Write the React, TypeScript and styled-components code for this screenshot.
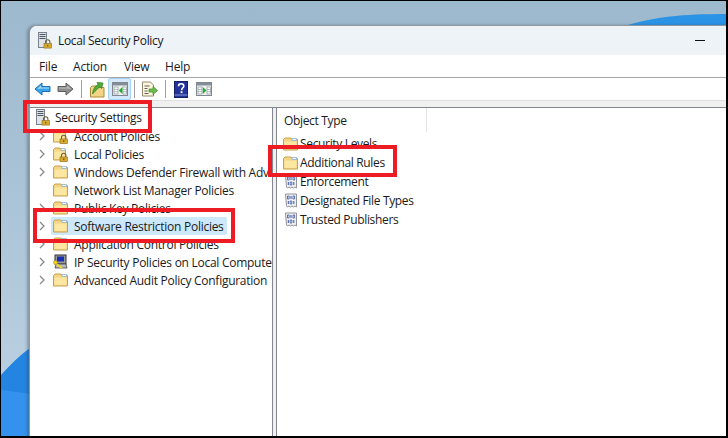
import React from "react";
import styled, { createGlobalStyle } from "styled-components";

const Global = createGlobalStyle`
  html, body { margin: 0; padding: 0; background: #fff; }
  body { font-family: "Open Sans", "Noto Sans", "Liberation Sans", sans-serif; }
`;

const Desktop = styled.div`
  position: relative;
  width: 728px;
  height: 438px;
  box-sizing: border-box;
  padding: 25px 0 0 29px;
  overflow: hidden;
  background: linear-gradient(180deg, #9db9ce 0%, #a6bfd3 30%, #b9cfe1 85%);
`;
const Wallpaper = styled.svg`
  position: absolute;
  inset: 0;
`;
const ScreenEdge = styled.div`
  position: absolute;
  inset: 0;
  border: solid #000;
  border-width: 1px 2px 2px 1px;
  pointer-events: none;
`;
const Win = styled.div`
  position: relative;
  height: 100%;
  display: flex;
  flex-direction: column;
  border-left: 1px solid #8f979f;
  border-top: 1px solid #8f979f;
  border-top-left-radius: 8px;
  overflow: hidden;
  background: #fff;
  box-shadow: -2px 0 3px rgba(60, 70, 80, 0.4);
`;
const TitleBar = styled.div`
  flex: 0 0 29px;
  display: flex;
  align-items: center;
  background: #eef3f8;
  padding: 0 23px 0 8px;
  font-size: 12px;
  color: #1a1a1a;
`;
const TitleText = styled.span`
  margin-left: 6px;
  flex: 1;
  letter-spacing: -0.33px;
`;
const Minimize = styled.div`
  width: 10px;
  height: 1px;
  background: #111;
`;
const MenuBar = styled.div`
  flex: 0 0 22px;
  display: flex;
  align-items: center;
  padding-left: 9px;
  font-size: 12px;
  color: #1a1a1a;
  border-bottom: 1px solid #a6a6a6;
  letter-spacing: -0.2px;
`;
const MenuItem = styled.span<{ $w: number }>`
  width: ${(p) => p.$w}px;
`;
const ToolBar = styled.div`
  flex: 0 0 22px;
  display: flex;
  align-items: center;
  padding-left: 1px;
`;
const ToolBtn = styled.div<{ $active?: boolean }>`
  width: 23px;
  height: 22px;
  box-sizing: border-box;
  display: flex;
  align-items: center;
  justify-content: center;
  border-radius: 2px;
  background: ${(p) => (p.$active ? "#d5e9fb" : "transparent")};
  border: 1px solid ${(p) => (p.$active ? "#a5d3f5" : "transparent")};
`;
const ToolSep = styled.div<{ $w: number }>`
  width: ${(p) => p.$w}px;
  height: 18px;
  display: flex;
  justify-content: center;
  &::before {
    content: "";
    width: 1px;
    background: #a0a0a0;
  }
`;
const Body = styled.div`
  flex: 1;
  min-height: 0;
  display: flex;
  flex-direction: column;
  background: #f0f0f0;
  border-top: 1px solid #dfdfdf;
`;
const Panes = styled.div`
  flex: 1;
  min-height: 0;
  margin-top: 6px;
  display: flex;
  border-top: 1px solid #82878f;
`;
const TreePane = styled.div`
  flex: 0 0 242px;
  background: #fff;
  overflow: hidden;
  border-right: 1px solid #82878f;
  font-size: 12px;
  color: #1a1a1a;
  letter-spacing: -0.27px;
`;
const Splitter = styled.div`
  flex: 0 0 3px;
  background: #f0f0f0;
`;
const ListPane = styled.div`
  flex: 1;
  background: #fff;
  border-left: 1px solid #82878f;
  font-size: 12px;
  color: #1a1a1a;
  letter-spacing: -0.34px;
  overflow: hidden;
`;
const RootRow = styled.div`
  height: 18px;
  margin-bottom: 1px;
  padding-left: 6px;
  display: flex;
  align-items: center;
  gap: 5px;
  white-space: nowrap;
  letter-spacing: -0.33px;
`;
const TreeRow = styled.div`
  height: 18px;
  display: flex;
  align-items: center;
  white-space: nowrap;
`;
const Chevron = styled.div`
  flex: 0 0 21px;
  display: flex;
  justify-content: flex-end;
  padding-right: 6px;
  box-sizing: border-box;
`;
const RowBody = styled.div<{ $sel?: boolean }>`
  display: flex;
  align-items: center;
  gap: 6px;
  height: 18px;
  padding: 0 3px 0 2px;
  border-radius: 2px;
  background: ${(p) => (p.$sel ? "#cde8fb" : "transparent")};
`;
const ListHead = styled.div`
  height: 26px;
`;
const HeadCell = styled.div`
  width: 150px;
  height: 24px;
  box-sizing: border-box;
  padding-left: 7px;
  display: flex;
  align-items: center;
  border-right: 1px solid #e5e5e5;
`;
const ListRow = styled.div`
  height: 19px;
  display: flex;
  align-items: center;
  gap: 2px;
  padding-left: 6px;
  white-space: nowrap;
`;
const Callout = styled.div<{ $x: number; $y: number; $w: number; $h: number }>`
  position: absolute;
  left: ${(p) => p.$x}px;
  top: ${(p) => p.$y}px;
  width: ${(p) => p.$w}px;
  height: ${(p) => p.$h}px;
  box-sizing: border-box;
  border: 4px solid #ed1c24;
`;

const Folder = () => (
  <svg width="15" height="14" viewBox="0 0 15 14">
    <path d="M.5 2.5V13h14V2.5H9L8 1H2L.5 2.5z" fill="#f3d586" stroke="#c9a24c" strokeWidth="1" />
    <path d="M1.5 4.5h12V12h-12z" fill="#fbe6a2" />
    <path d="M9 1.5h4.5v2H9z" fill="#fff" stroke="#7fa8c8" strokeWidth=".7" />
  </svg>
);
const LockGlyph = ({ x = 0, y = 0 }: { x?: number; y?: number }) => (
  <g transform={`translate(${x} ${y})`}>
    <path d="M2 4V2.5a2.2 2.2 0 0 1 4.4 0V4" fill="none" stroke="#6f6238" strokeWidth="1.1" />
    <rect x=".5" y="4" width="7.4" height="4.6" fill="#d8a92e" stroke="#8a6a1a" strokeWidth=".6" />
    <rect x="3.6" y="5.4" width="1.2" height="1.6" fill="#6f5412" />
  </g>
);
const LockFolder = () => (
  <svg width="15" height="15" viewBox="0 0 15 15">
    <path d="M.5 2.5V13h12V2.5H8L7 1H2L.5 2.5z" fill="#f3d586" stroke="#c9a24c" strokeWidth="1" />
    <path d="M1.5 4.5h10V12h-10z" fill="#fbe6a2" />
    <path d="M8 1.5h4v2H8z" fill="#fff" stroke="#7fa8c8" strokeWidth=".7" />
    <LockGlyph x={6.5} y={6} />
  </svg>
);
const ServerLock = () => (
  <svg width="14" height="17" viewBox="0 0 14 17" style={{ flex: "none" }}>
    <rect x=".5" y=".5" width="8" height="15" fill="#dfe3e7" stroke="#79828b" />
    <path d="M1.5 2.5h6M1.5 4.5h6M1.5 6.5h6" stroke="#4d5862" strokeWidth="1" />
    <LockGlyph x={5.5} y={7.5} />
  </svg>
);
const IpIcon = () => (
  <svg width="15" height="16" viewBox="0 0 15 16">
    <rect x="2" y="1" width="11" height="9" fill="#9a9a9a" stroke="#333" />
    <rect x="4" y="2.5" width="7" height="5" fill="#1b2fb0" />
    <path d="M3 10h10l1 4H2z" fill="#b9b9b9" stroke="#444" strokeWidth=".8" />
    <path d="M2 9l7 5" stroke="#f2d821" strokeWidth="2" />
    <circle cx="2.5" cy="8.5" r="2" fill="#f2d821" stroke="#8c7a10" strokeWidth=".5" />
  </svg>
);
const BinaryDoc = () => (
  <svg width="15" height="16" viewBox="0 0 15 16">
    <path d="M2.5 1h11v13l-1.5-1-1.5 1-1.5-1-1.5 1-1.5-1-1.5 1-1-1z" fill="#eef0f4" stroke="#93939b" />
    <path d="M4.5 3h1.6v3H4.5zM10 3h1.6v3H10zM7.2 8h1.6v3H7.2z" fill="#fff" stroke="#3a55a0" strokeWidth=".8" />
    <path d="M8 3v3M5.3 8v3M10.8 8v3" stroke="#3a55a0" strokeWidth="1" />
  </svg>
);
const Chev = () => (
  <svg width="6" height="10" viewBox="0 0 6 10">
    <path d="M1 1l4 4-4 4" fill="none" stroke="#8a8a8a" strokeWidth="1.3" />
  </svg>
);
const BackIcon = () => (
  <svg width="17" height="14" viewBox="0 0 17 14">
    <path d="M1 7l7-6v3.5h8v5H8V13z" fill="#3aa4e8" stroke="#1d6fb5" />
    <path d="M3 7l4-3.5v2h8v1H7z" fill="#a5dcf8" />
  </svg>
);
const ForwardIcon = () => (
  <svg width="17" height="14" viewBox="0 0 17 14">
    <path d="M16 7L9 1v3.5H1v5h8V13z" fill="#8e8e8e" stroke="#5c5c5c" />
    <path d="M14 7l-4-3.5v2H2v1h8z" fill="#bdbdbd" />
  </svg>
);
const UpIcon = () => (
  <svg width="16" height="17" viewBox="0 0 16 17">
    <path d="M1.5 6.5V16h13.5V6.5H10L9 5H3L1.5 6.5z" fill="#f3d586" stroke="#b08a3a" />
    <path d="M3.5 13C4 8 6 5 9 3.8L8 1.5 14 2l-1.5 5.5-1.6-1.8C9 7 7 9.5 3.5 13z" fill="#4fae3a" stroke="#2b7a20" strokeWidth=".7" />
  </svg>
);
const PaneIcon = ({ left }: { left?: boolean }) => (
  <svg width="16" height="14" viewBox="0 0 16 14">
    <rect x=".5" y=".5" width="15" height="13" fill="#eef0f2" stroke="#7f8890" />
    <path d="M1 1h14v2.5H1z" fill="#848e96" />
    <rect x="2" y="5" width="4" height="7" fill="#fff" stroke="#8f979e" strokeWidth=".7" />
    <path d="M2 7.4h4M2 9.7h4" stroke="#8f979e" strokeWidth=".7" />
    <rect x="11" y="5" width="3.5" height="7" fill="#fff" stroke="#8f979e" strokeWidth=".7" />
    <path d="M11 7.4h3.5M11 9.7h3.5" stroke="#8f979e" strokeWidth=".7" />
    {left ? <path d="M10.4 5L6.8 8.5l3.6 3.5z" fill="#1fae2b" /> : <path d="M6.8 5l3.6 3.5L6.8 12z" fill="#1fae2b" />}
  </svg>
);
const ExportIcon = () => (
  <svg width="17" height="16" viewBox="0 0 17 16">
    <path d="M1.5 1h8l3 3v11h-11z" fill="#fdf6dc" stroke="#8f8a70" />
    <path d="M3.5 5h5M3.5 7.5h3M3.5 10h3M3.5 12.5h4" stroke="#5f5f5f" />
    <path d="M8 8h4V5.5L16.5 9.5 12 13.5V11H8z" fill="#6cc04a" stroke="#37862a" strokeWidth=".7" />
  </svg>
);
const HelpIcon = () => (
  <svg width="14" height="17" viewBox="0 0 14 17">
    <rect x=".5" y=".5" width="13" height="16" fill="#22349a" stroke="#141f66" />
    <path d="M.5 14h13" stroke="#8d98d8" />
    <path d="M4.5 5.2C4.5 3.5 5.8 2.7 7.2 2.7s2.6.9 2.6 2.3c0 1.9-2.2 2-2.2 4.2" fill="none" stroke="#fff" strokeWidth="1.6" />
    <rect x="6.6" y="10.2" width="1.9" height="1.9" fill="#fff" />
  </svg>
);

const tree: { label: string; icon: React.ReactNode; chev?: boolean; sel?: boolean }[] = [
  { label: "Account Policies", icon: <LockFolder />, chev: true },
  { label: "Local Policies", icon: <LockFolder />, chev: true },
  { label: "Windows Defender Firewall with Advanced Security", icon: <Folder />, chev: true },
  { label: "Network List Manager Policies", icon: <Folder /> },
  { label: "Public Key Policies", icon: <Folder />, chev: true },
  { label: "Software Restriction Policies", icon: <Folder />, chev: true, sel: true },
  { label: "Application Control Policies", icon: <Folder />, chev: true },
  { label: "IP Security Policies on Local Computer", icon: <IpIcon />, chev: true },
  { label: "Advanced Audit Policy Configuration", icon: <Folder />, chev: true },
];
const list = [
  { label: "Security Levels", icon: <Folder /> },
  { label: "Additional Rules", icon: <Folder /> },
  { label: "Enforcement", icon: <BinaryDoc /> },
  { label: "Designated File Types", icon: <BinaryDoc /> },
  { label: "Trusted Publishers", icon: <BinaryDoc /> },
];

export default function App() {
  return (
    <Desktop>
      <Global />
      <Wallpaper width="728" height="438" viewBox="0 0 728 438">
        <path d="M628 25C655 17 680 14 728 14V25z" fill="#2a93e6" />
        <path d="M0 376C10 365 20 355 30 348V438H0z" fill="#2384e2" />
        <path d="M0 390C10 391 20 392 30 394V438H0z" fill="#3492ee" />
      </Wallpaper>
      <Win>
        <TitleBar>
          <ServerLock />
          <TitleText>Local Security Policy</TitleText>
          <Minimize />
        </TitleBar>
        <MenuBar>
          <MenuItem $w={34}>File</MenuItem>
          <MenuItem $w={51}>Action</MenuItem>
          <MenuItem $w={41}>View</MenuItem>
          <MenuItem $w={40}>Help</MenuItem>
        </MenuBar>
        <ToolBar>
          <ToolBtn><BackIcon /></ToolBtn>
          <ToolBtn><ForwardIcon /></ToolBtn>
          <ToolSep $w={8} />
          <ToolBtn><UpIcon /></ToolBtn>
          <ToolBtn $active><PaneIcon left /></ToolBtn>
          <ToolSep $w={7} />
          <ToolBtn><ExportIcon /></ToolBtn>
          <ToolSep $w={8} />
          <ToolBtn><HelpIcon /></ToolBtn>
          <ToolBtn><PaneIcon /></ToolBtn>
        </ToolBar>
        <Body>
          <Panes>
            <TreePane>
              <RootRow>
                <ServerLock />
                <span>Security Settings</span>
              </RootRow>
              {tree.map((t) => (
                <TreeRow key={t.label}>
                  <Chevron>{t.chev && <Chev />}</Chevron>
                  <RowBody $sel={t.sel}>
                    {t.icon}
                    <span>{t.label}</span>
                  </RowBody>
                </TreeRow>
              ))}
            </TreePane>
            <Splitter />
            <ListPane>
              <ListHead>
                <HeadCell>Object Type</HeadCell>
              </ListHead>
              {list.map((l) => (
                <ListRow key={l.label}>
                  {l.icon}
                  <span>{l.label}</span>
                </ListRow>
              ))}
            </ListPane>
          </Panes>
        </Body>
      </Win>
      <Callout $x={23} $y={100} $w={129} $h={33} />
      <Callout $x={33} $y={208} $w={202} $h={35} />
      <Callout $x={268} $y={145} $w={129} $h={32} />
      <ScreenEdge />
    </Desktop>
  );
}
